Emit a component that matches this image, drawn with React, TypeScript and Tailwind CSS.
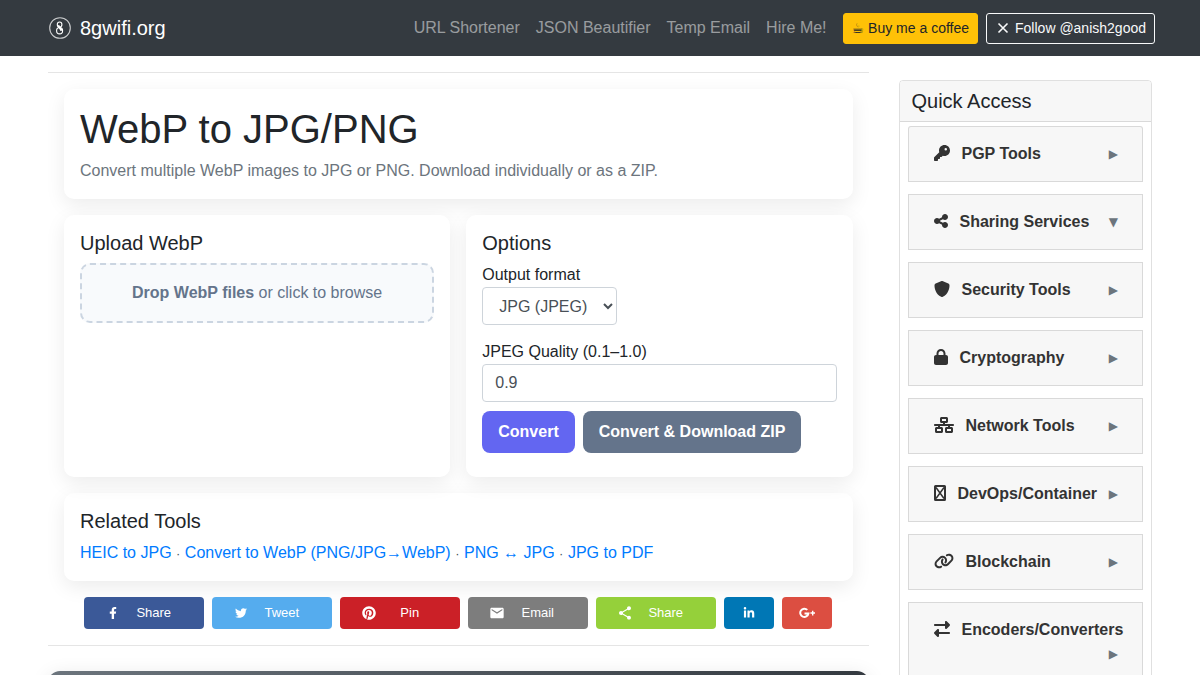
import React from "react";
import { FaKey, FaShareNodes, FaShield, FaLock, FaNetworkWired, FaLink, FaRightLeft } from "react-icons/fa6";
import { FaFacebookF, FaTwitter, FaPinterest, FaLinkedinIn } from "react-icons/fa";
import { MdEmail, MdShare } from "react-icons/md";

function MissingGlyph({ className }: { className?: string }) {
  return (
    <svg viewBox="0 0 12 16" className={className} fill="none" stroke="currentColor" aria-hidden="true">
      <rect x="1" y="1" width="10" height="14" rx="0.5" strokeWidth="2" />
      <path d="M2 2.5 10 13.5M10 2.5 2 13.5" strokeWidth="1.5" />
    </svg>
  );
}

function GooglePlus({ className }: { className?: string }) {
  return (
    <svg viewBox="0 0 16 16" className={className} aria-hidden="true">
      <path
        d="M8.300 4.900A4.100 4.100 0 1 0 9.400 8.500H5.500"
        fill="none"
        stroke="currentColor"
        strokeWidth="2"
      />
      <path d="M13 5.700v1.600h-1.600v1.500h1.600v1.600h1.400v-1.600H16v-1.500h-1.600V5.700z" fill="currentColor" />
    </svg>
  );
}

const navLinks = ["URL Shortener", "JSON Beautifier", "Temp Email", "Hire Me!"];

const tools = [
  { label: "PGP Tools", Icon: FaKey, width: "w-4", open: false },
  { label: "Sharing Services", Icon: FaShareNodes, width: "w-3.5", open: true },
  { label: "Security Tools", Icon: FaShield, width: "w-4", open: false },
  { label: "Cryptography", Icon: FaLock, width: "w-3.5", open: false },
  { label: "Network Tools", Icon: FaNetworkWired, width: "w-5", open: false },
  { label: "DevOps/Container", Icon: MissingGlyph, width: "w-3", open: false },
  { label: "Blockchain", Icon: FaLink, width: "w-5", open: false },
  { label: "Encoders/Converters", Icon: FaRightLeft, width: "w-4", open: false },
];

const shares = [
  { label: "Share", Icon: FaFacebookF, color: "bg-[#3b5998]", size: "size-3" },
  { label: "Tweet", Icon: FaTwitter, color: "bg-[#55acee]", size: "size-3" },
  { label: "Pin", Icon: FaPinterest, color: "bg-[#cb2027]", size: "size-3.5" },
  { label: "Email", Icon: MdEmail, color: "bg-[#7d7d7d]", size: "size-4" },
  { label: "Share", Icon: MdShare, color: "bg-[#95d03a]", size: "size-4" },
];

const card = "rounded-[10px] bg-white p-4 shadow-[0_6px_20px_rgba(0,0,0,0.08)]";
const heading = "mb-2 text-xl leading-6";
const link = "text-[#007bff] hover:underline";

function Dot() {
  return (
    <>
      {" "}
      <span className="text-[13px] text-[#495057]">·</span>{" "}
    </>
  );
}

export default function App() {
  return (
    <div className="min-h-screen bg-white font-['Liberation_Sans',sans-serif] text-base text-[#212529]">
      <nav className="flex h-14 items-center justify-between bg-[#343a40] pr-[45px] pl-12">
        <a href="#" className="flex items-center gap-2 text-xl text-white">
          <svg viewBox="0 0 24 24" className="size-6" fill="none" stroke="currentColor" aria-hidden="true">
            <circle cx="12" cy="12" r="10.3" strokeWidth="1.1" opacity="0.75" />
            <ellipse cx="11.600" cy="8.600" rx="2.300" ry="2.600" strokeWidth="1.100" />
            <ellipse cx="11.600" cy="14.700" rx="3" ry="3.200" strokeWidth="1.100" />
            <path d="M10.200 9.300c.6 2.200 2.600 2.800 3.300 5.400" strokeWidth="2.200" />
          </svg>
          8gwifi.org
        </a>
        <div className="flex items-center gap-2">
          {navLinks.map((l) => (
            <a key={l} href="#" className="px-1 pb-px text-white/50 hover:text-white/75">
              {l}
            </a>
          ))}
          <a
            href="#"
            className="ml-1 flex h-[31px] items-center gap-1 rounded-[3px] border border-[#ffc107] bg-[#ffc107] px-2 text-sm leading-[21px] text-[#212529]"
          >
            <span className="font-['DejaVu_Sans',sans-serif]">{"\u2615\uFE0E"}</span>
            Buy me a coffee
          </a>
          <a
            href="#"
            className="flex h-[31px] items-center gap-1 rounded-[3px] border border-[#f8f9fa] px-2 text-sm leading-[21px] text-[#f8f9fa]"
          >
            <svg viewBox="0 0 16 16" className="size-4" fill="none" stroke="currentColor" strokeWidth="1.6" aria-hidden="true">
              <path d="M3.500 3.500l9 9M12.500 3.500l-9 9" />
            </svg>
            Follow @anish2good
          </a>
        </div>
      </nav>

      <div className="flex px-[33px]">
        <main className="w-3/4 px-[15px]">
          <hr className="my-4 border-black/10" />
          <div className="space-y-4 px-4">
            <header className={card}>
              <h1 className="mb-1.5 text-[40px] leading-[48px]">WebP to JPG/PNG</h1>
              <p className="text-[#6c757d]">Convert multiple WebP images to JPG or PNG. Download individually or as a ZIP.</p>
            </header>

            <div className="grid grid-cols-2 gap-4">
              <section className={card}>
                <h2 className={heading}>Upload WebP</h2>
                <label className="block cursor-pointer rounded-[10px] border-2 border-dashed border-[#cbd5e1] bg-[#f8fafc] p-4 text-center text-[#64748b]">
                  <b>Drop WebP files</b> or click to browse
                  <input type="file" accept="image/webp" multiple className="sr-only" />
                </label>
              </section>

              <section className={card}>
                <h2 className={heading}>Options</h2>
                <label htmlFor="format" className="block">
                  Output format
                </label>
                <select
                  id="format"
                  className="mb-[15px] block h-[38px] rounded border border-[#ced4da] bg-white px-3 text-[#495057]"
                >
                  <option>JPG (JPEG)</option>
                  <option>PNG</option>
                </select>
                <label htmlFor="quality" className="block">
                  JPEG Quality (0.1–1.0)
                </label>
                <input
                  id="quality"
                  type="text"
                  defaultValue="0.9"
                  className="mb-[9px] block h-[38px] w-full rounded border border-[#ced4da] px-3 text-[#495057]"
                />
                <div className="mb-2 flex gap-2">
                  <button className="h-[42px] rounded-lg bg-[#6366f1] px-4 font-bold text-white">Convert</button>
                  <button className="h-[42px] rounded-lg bg-[#64748b] px-4 font-bold text-white">
                    Convert &amp; Download ZIP
                  </button>
                </div>
              </section>
            </div>

            <section className={card}>
              <h2 className={heading}>Related Tools</h2>
              <p>
                <a href="#" className={link}>HEIC to JPG</a>
                <Dot />
                <a href="#" className={link}>Convert to WebP (PNG/JPG→WebP)</a>
                <Dot />
                <a href="#" className={link}>PNG ↔ JPG</a>
                <Dot />
                <a href="#" className={link}>JPG to PDF</a>
              </p>
            </section>
          </div>

          <div className="mt-4 flex justify-center gap-2 text-[13px] text-white">
            {shares.map(({ label, Icon, color, size }, i) => (
              <button key={i} className={`flex h-8 w-[120px] items-center rounded pl-[21px] ${color}`}>
                <span className="flex w-4 justify-center">
                  <Icon className={size} />
                </span>
                <span className="flex-1 pr-[18px] text-center">{label}</span>
              </button>
            ))}
            <button aria-label="LinkedIn" className="flex h-8 w-[50px] items-center justify-center rounded bg-[#0077b5]">
              <FaLinkedinIn className="size-3" />
            </button>
            <button aria-label="Google Plus" className="flex h-8 w-[50px] items-center justify-center rounded bg-[#dc4e41]">
              <GooglePlus className="size-4" />
            </button>
          </div>

          <hr className="mt-4 mb-[25px] border-black/10" />
          <div className="h-16 rounded-xl bg-linear-to-r from-[#6c757d] to-[#343a40] shadow-[0_4px_20px_rgba(0,0,0,0.1)]" />
        </main>

        <aside className="w-1/4 px-[15px] pt-6">
          <div className="rounded border border-black/12">
            <h2 className="rounded-t-[3px] border-b border-black/12 bg-[#f7f7f7] px-3 py-2 text-xl leading-6">Quick Access</h2>
            <div className="space-y-3 px-2 py-1">
              {tools.map(({ label, Icon, width, open }) => (
                <button
                  key={label}
                  aria-expanded={open}
                  className="flex w-full flex-wrap items-center border border-black/12 bg-[#f7f7f7] py-[15px] pr-4 pl-[25px] text-left font-bold text-[#333] first:rounded-t-[3px]"
                >
                  <Icon className={`mr-3 mb-0.5 h-4 ${width}`} />
                  <span>{label}</span>
                  <span className="mr-2 ml-auto font-['DejaVu_Sans',sans-serif] text-xs leading-6 font-normal text-[#6c757d]">
                    {open ? "▼" : "▶"}
                  </span>
                </button>
              ))}
            </div>
          </div>
        </aside>
      </div>
    </div>
  );
}
